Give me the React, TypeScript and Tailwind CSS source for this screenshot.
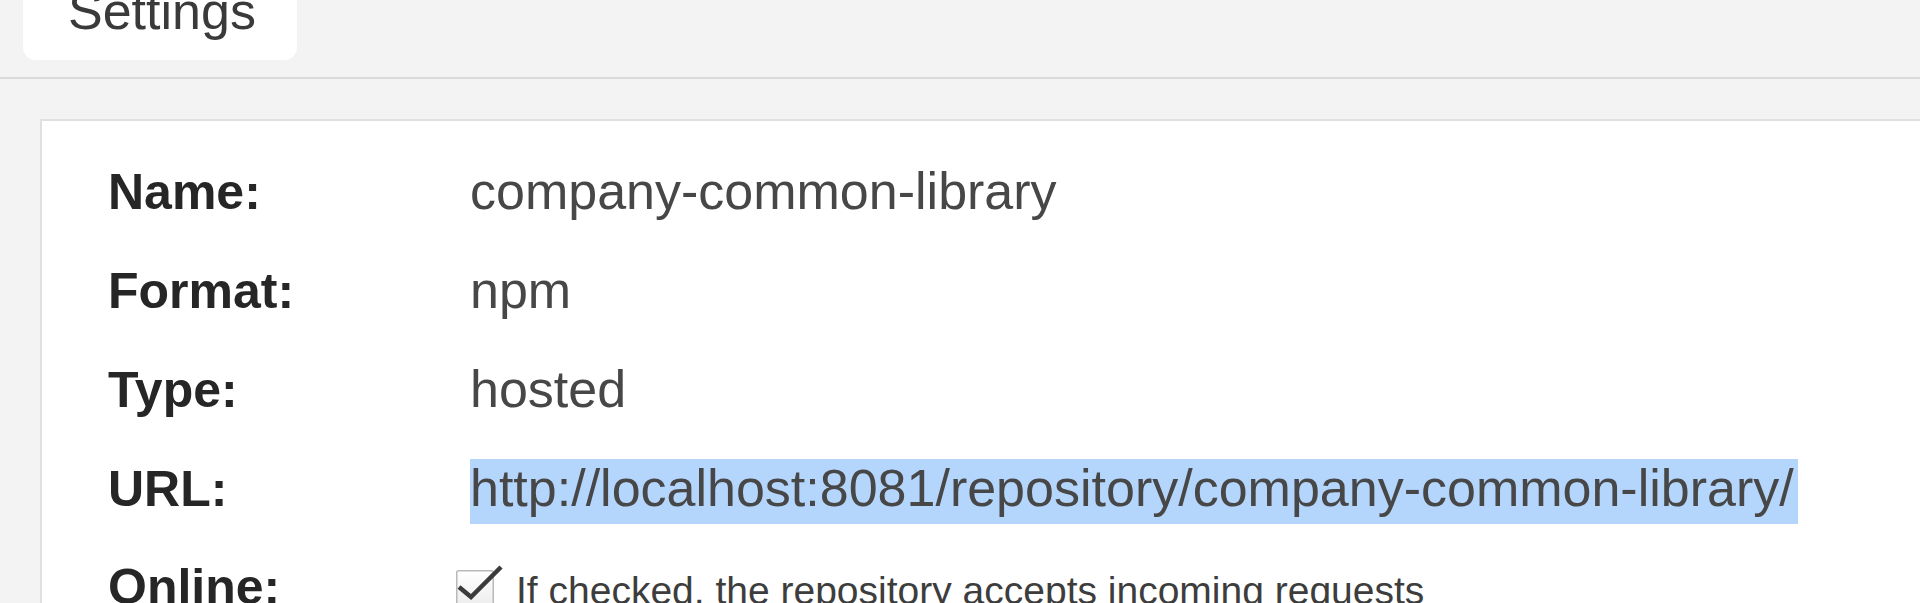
const rows = [
  { label: "Name:", value: "company-common-library" },
  { label: "Format:", value: "npm" },
  { label: "Type:", value: "hosted" },
];

const CheckIcon = () => (
  <svg width="50" height="46" viewBox="0 0 50 46" className="inline-block shrink-0 align-[-5px] -ml-[16px] mr-[12px]">
    <defs>
      <linearGradient id="cb" x1="0" y1="0" x2="0" y2="1">
        <stop offset="0" stopColor="#ffffff" />
        <stop offset="1" stopColor="#ececec" />
      </linearGradient>
    </defs>
    <rect x="2.75" y="7.75" width="36.5" height="36.5" rx="2" fill="url(#cb)" stroke="#b9b9b9" strokeWidth="1.5" />
    <path d="M5 24 L17 34 L47 4" fill="none" stroke="#3b3b3b" strokeWidth="4.5" strokeLinejoin="miter" />
  </svg>
);

export default function App() {
  return (
    <div className="w-full h-[603px] overflow-hidden bg-[#f3f3f3] font-['Liberation_Sans',Arial,sans-serif]">
      {/* tab strip */}
      <div className="h-[79px] border-b-2 border-[#dadada]">
        <div className="ml-[23px] w-[274px] h-[60px] bg-white rounded-b-[13px] pl-[45px] overflow-hidden">
          <div className="-mt-[15px] text-[52px] leading-none text-[#3a3a3a]">Settings</div>
        </div>
      </div>

      {/* settings panel */}
      <div className="mt-[40px] ml-[40px] h-[500px] bg-white border-t-2 border-l-2 border-[#e0e0e0] pt-[21px] pl-[66px]">
        {rows.map((r) => (
          <div key={r.label} className="flex items-baseline h-[99px] leading-[99px]">
            <div className="w-[362px] shrink-0 text-[50px] font-bold text-[#262626]">{r.label}</div>
            <div className="text-[52px] text-[#474747]">{r.value}</div>
          </div>
        ))}
        <div className="flex items-baseline h-[99px] leading-[99px]">
          <div className="w-[362px] shrink-0 text-[50px] font-bold text-[#262626]">URL:</div>
          <div className="text-[52px] text-[#474747]">
            <span className="bg-[#b4d5fc] pb-[7px] pr-[4px]">
              http://localhost:8081/repository/company-common-library/
            </span>
          </div>
        </div>
        <div className="flex items-baseline h-[99px] leading-[99px]">
          <div className="w-[362px] shrink-0 text-[50px] font-bold text-[#262626]">Online:</div>
          <div className="text-[39px] text-[#3d3d3d] whitespace-nowrap">
            <CheckIcon />
            If checked, the repository accepts incoming requests
          </div>
        </div>
      </div>
    </div>
  );
}
